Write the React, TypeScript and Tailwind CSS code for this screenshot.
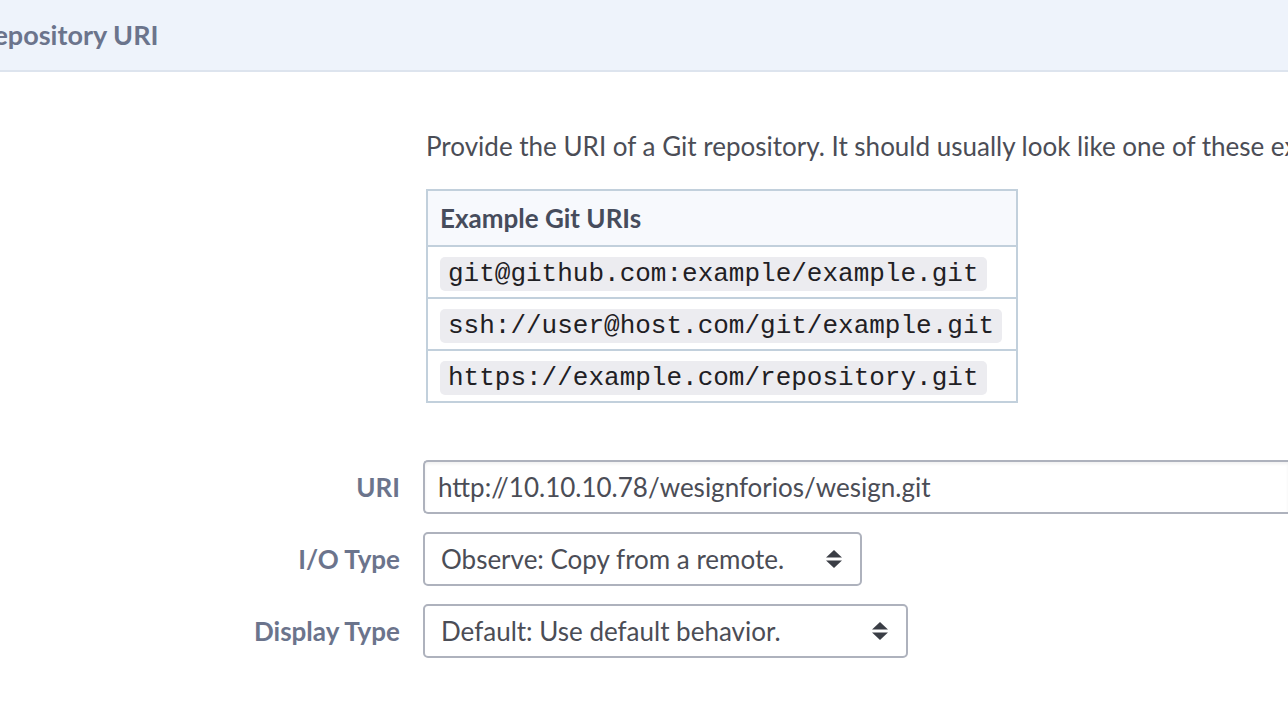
import React from 'react';

const examples = [
  'git@github.com:example/example.git',
  'ssh://user@host.com/git/example.git',
  'https://example.com/repository.git',
];

function UpDownArrows() {
  return (
    <svg width="18" height="20" viewBox="0 0 18 20" className="shrink-0">
      <path d="M9 1 L17 8.5 L1 8.5 Z" fill="#3a3d45" />
      <path d="M9 19 L17 11.5 L1 11.5 Z" fill="#3a3d45" />
    </svg>
  );
}

function FieldRow({ label, children }: { label: string; children: React.ReactNode }) {
  return (
    <div className="flex items-center">
      <label className="w-[400px] shrink-0 text-right text-[26px] font-bold text-[#6b748c]">{label}</label>
      <div className="ml-[23px] flex-1 min-w-0">{children}</div>
    </div>
  );
}

function SelectBox({ value, width }: { value: string; width: string }) {
  return (
    <div
      className={`flex h-[54px] items-center justify-between rounded-[5px] border-2 border-[#aeb2bd] bg-white pl-[16px] pr-[17px] text-[26px] text-[#4b4d56] ${width}`}
    >
      <span className="whitespace-nowrap">{value}</span>
      <UpDownArrows />
    </div>
  );
}

export default function App() {
  return (
    <div className="min-h-screen overflow-hidden bg-white font-['Lato','Open_Sans',sans-serif]">
      <div className="h-[72px] border-b-2 border-[#dde4ee] bg-[#eef3fb] flex items-center">
        <h1 className="-ml-[23px] whitespace-nowrap text-[27px] font-bold text-[#6b748c]">Repository URI</h1>
      </div>

      <div className="pl-[426px] pt-[56px]">
        <p className="whitespace-nowrap text-[26px] leading-[36px] text-[#4b4d56]">
          Provide the URI of a Git repository. It should usually look like one of these examples:
        </p>

        <table className="mt-[25px] border-2 border-[#c2d0dc] border-collapse">
          <thead>
            <tr>
              <th className="h-[56px] bg-[#f7f9fd] px-[12px] text-left text-[26px] font-bold text-[#464c5c] border-b-2 border-[#c2d0dc]">
                Example Git URIs
              </th>
            </tr>
          </thead>
          <tbody>
            {examples.map((uri, i) => (
              <tr key={i} className={i < examples.length - 1 ? 'border-b-2 border-[#c2d0dc]' : ''}>
                <td className="h-[52px] px-[12px] pr-[14px] pt-[3px]">
                  <code className="inline-block rounded-[5px] bg-[#ececf0] px-[8px] py-[1px] font-['Liberation_Mono','Courier_New',monospace] text-[26px] leading-[32px] text-[#1f2024]">
                    {uri}
                  </code>
                </td>
              </tr>
            ))}
          </tbody>
        </table>
      </div>

      <div className="mt-[57px] flex flex-col gap-[18px]">
        <FieldRow label="URI">
          <div className="flex h-[54px] items-center whitespace-nowrap rounded-l-[5px] border-2 border-r-0 border-[#aeb2bd] bg-white pl-[13px] text-[26px] text-[#4b4d56] shadow-[inset_0_2px_3px_rgba(0,0,0,0.06)]">
            http://10.10.10.78/wesignforios/wesign.git
          </div>
        </FieldRow>
        <FieldRow label="I/O Type">
          <SelectBox value="Observe: Copy from a remote." width="w-[439px]" />
        </FieldRow>
        <FieldRow label="Display Type">
          <SelectBox value="Default: Use default behavior." width="w-[485px]" />
        </FieldRow>
      </div>
    </div>
  );
}
